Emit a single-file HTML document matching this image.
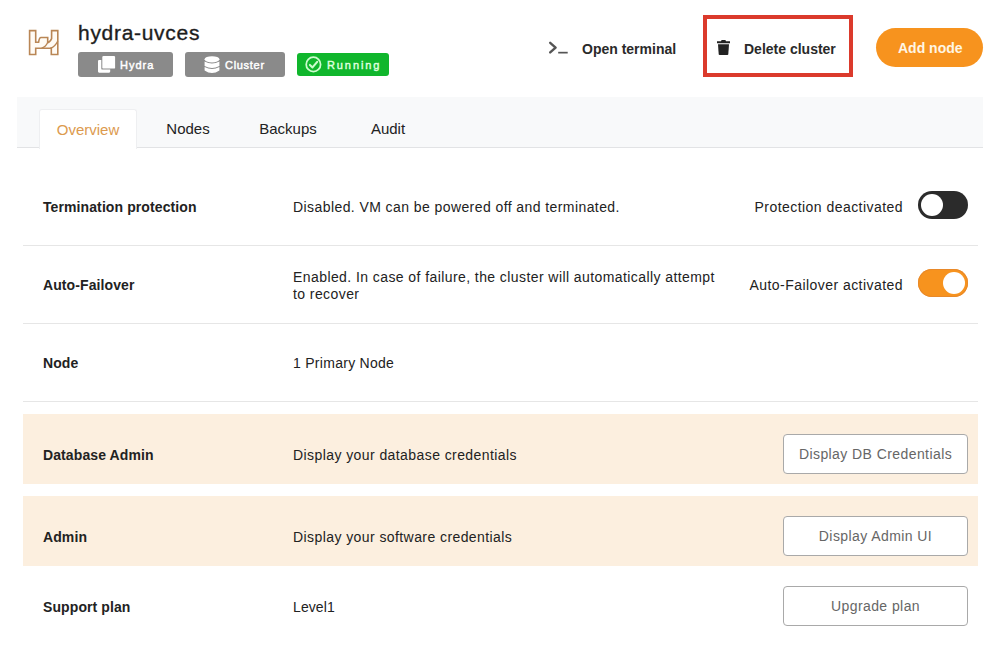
<!DOCTYPE html>
<html><head><meta charset="utf-8">
<style>
*{box-sizing:border-box;margin:0;padding:0}
html,body{width:1000px;height:646px;overflow:hidden;background:#fff;font-family:"Liberation Sans",sans-serif;color:#222}
.abs{position:absolute}
.logo{left:26px;top:27px;width:36px;height:31px}
.title{left:78px;top:20px;font-size:21px;line-height:26px;color:#1d1d1d;white-space:nowrap;letter-spacing:0.7px;-webkit-text-stroke:0.35px #1d1d1d}
.badge{top:52px;height:25px;border-radius:3px;background:#8a8a8a;color:#fff}
.btxt{position:absolute;top:6px;font-size:11px;line-height:14px;font-weight:normal;letter-spacing:1px;white-space:nowrap;-webkit-text-stroke:0.45px currentColor}
.b1{left:78px;width:95px}
.b2{left:185px;width:100px}
.b3{left:297px;width:92px;top:53px;height:23px;background:#10b62c;color:#dcffdc}
.hbtn{font-size:14px;line-height:16px;font-weight:bold;color:#2a2a2a;white-space:nowrap;letter-spacing:0}
.redbox{left:703px;top:15px;width:150px;height:62px;border:4px solid #db3a2c}
.addnode{left:876px;top:28px;width:107px;height:39px;border-radius:20px;background:#f7931e;color:#fff8ea}
.tabbar{left:17px;top:97px;width:966px;height:51px;background:#f8f9fa;border-bottom:1px solid #e2e3e5}
.tab{top:109px;height:39px;width:98px;font-size:15px;color:#222;display:flex;align-items:center;justify-content:center}
.tab.active{background:#fff;color:#dc9a4e;border-radius:3px 3px 0 0;height:40px;padding-bottom:0px;border:1px solid #eeeff1;border-bottom:none}
.row{left:23px;width:955px;border-bottom:1px solid #e6e6e6}
.peach{background:#fcefdf;border-bottom:none}
.lbl{position:absolute;left:20px;font-size:14px;line-height:17px;font-weight:bold;color:#222;white-space:nowrap;letter-spacing:0.1px}
.val{position:absolute;left:270px;font-size:14px;color:#222;white-space:nowrap;line-height:17px;letter-spacing:0.42px}
.rt{position:absolute;right:75px;font-size:14px;line-height:17px;color:#222;white-space:nowrap;letter-spacing:0.45px}
.tog{position:absolute;width:50px;height:28px;border-radius:14px}
.knob{position:absolute;top:3px;width:22px;height:22px;border-radius:11px;background:#fff}
.obtn{position:absolute;left:760px;width:185px;height:40px;border:1px solid #a9a9a9;border-radius:4px;background:#fff;color:#666;font-size:14px;letter-spacing:0.42px;display:flex;align-items:center;justify-content:center}
</style></head><body>
<svg class="abs logo" viewBox="26 27 36 31">
<path d="M29.6 30.6H35.7V42.2H38.6Q39.3 37.5 41 37.5H47.7V42.5H48.5Q50.6 41.2 51.6 38.6V30.6H57.8V54.5H51.3V48.2H35.7V54.5H29.6Z" fill="#fffbf5" stroke="#b98655" stroke-width="1.6"/>
<path d="M47.7 42.5Q45.5 47 41.6 48.2M50.3 48.2Q55 47 57.8 41" fill="none" stroke="#b98655" stroke-width="1.4"/>
</svg>
<div class="abs title">hydra-uvces</div>
<div class="abs badge b1">
  <svg class="abs" style="left:19px;top:3px" width="19" height="19" viewBox="0 0 19 19"><path d="M1 6Q1 4.9 2.1 4.9H4.3V13.4Q4.3 14.6 5.5 14.6H13.2V16.6Q13.2 17.7 12.1 17.7H2.1Q1 17.7 1 16.6Z" fill="#fff"/><rect x="5.3" y="0.9" width="12.8" height="12.7" rx="1.2" fill="#fff"/></svg>
  <div class="btxt" style="left:42px">Hydra</div>
</div>
<div class="abs badge b2">
  <svg class="abs" style="left:19px;top:3.8px" width="16" height="18" viewBox="0 0 16 18"><ellipse cx="8" cy="3.3" rx="7.4" ry="3.1" fill="#fff"/><path d="M0.6 5.4Q8 9.6 15.4 5.4V10Q8 14.2 0.6 10Z" fill="#fff"/><path d="M0.6 11Q8 15.2 15.4 11V14.6Q8 19.6 0.6 14.6Z" fill="#fff"/></svg>
  <div class="btxt" style="left:40px;letter-spacing:0.7px">Cluster</div>
</div>
<div class="abs badge b3">
  <svg class="abs" style="left:8px;top:2px" width="18" height="18" viewBox="0 0 18 18"><circle cx="8.4" cy="9.4" r="7.2" fill="none" stroke="#cdfccd" stroke-width="1.75"/><path d="M4.9 9.9L7.5 12.4L12.2 6.9" fill="none" stroke="#cdfccd" stroke-width="2.1" stroke-linecap="round" stroke-linejoin="round"/></svg>
  <div class="btxt" style="left:30px;top:5px;letter-spacing:1.9px">Running</div>
</div>

<svg class="abs" style="left:546px;top:38px" width="24" height="18" viewBox="0 0 24 18"><path d="M4.2 4.8L9.6 9.6L4.2 14.4" fill="none" stroke="#555" stroke-width="2.4" stroke-linecap="round" stroke-linejoin="round"/><rect x="12.2" y="13.8" width="9.5" height="1.7" fill="#555"/></svg>
<div class="abs hbtn" style="left:582px;top:41px">Open terminal</div>
<div class="abs redbox"></div>
<svg class="abs" style="left:715px;top:38px" width="17" height="18" viewBox="0 0 17 18"><path d="M2 3.2H6L6.6 2H10.4L11 3.2H15V5.2H2Z" fill="#222"/><path d="M3 6.2H14L13.3 16.2Q13.2 17 12.4 17H4.6Q3.8 17 3.7 16.2Z" fill="#222"/></svg>
<div class="abs hbtn" style="left:744px;top:41px">Delete cluster</div>
<div class="abs addnode"><div class="abs hbtn" style="left:22px;top:12px;color:#fff6e4">Add node</div></div>

<div class="abs tabbar"></div>
<div class="abs tab active" style="left:39px">Overview</div>
<div class="abs tab" style="left:139px">Nodes</div>
<div class="abs tab" style="left:239px">Backups</div>
<div class="abs tab" style="left:339px">Audit</div>

<div class="abs row" style="top:168px;height:78px">
  <div class="lbl" style="top:31px">Termination protection</div>
  <div class="val" style="top:31px">Disabled. VM can be powered off and terminated.</div>
  <div class="rt" style="top:31px">Protection deactivated</div>
  <div class="tog" style="left:895px;top:23px;background:#2b2b2b"><div class="knob" style="left:3px"></div></div>
</div>
<div class="abs row" style="top:246px;height:78px">
  <div class="lbl" style="top:31px">Auto-Failover</div>
  <div class="val" style="top:23px">Enabled. In case of failure, the cluster will automatically attempt<br>to recover</div>
  <div class="rt" style="top:31px">Auto-Failover activated</div>
  <div class="tog" style="left:895px;top:23px;background:#f7931e;box-shadow:inset 0 0 0 1px #e8892a"><div class="knob" style="left:25px"></div></div>
</div>
<div class="abs row" style="top:324px;height:78px">
  <div class="lbl" style="top:31px">Node</div>
  <div class="val" style="top:31px;letter-spacing:0.28px">1 Primary Node</div>
</div>
<div class="abs row peach" style="top:414px;height:70px">
  <div class="lbl" style="top:33px">Database Admin</div>
  <div class="val" style="top:33px">Display your database credentials</div>
  <div class="obtn" style="top:20px">Display DB Credentials</div>
</div>
<div class="abs row peach" style="top:496px;height:70px">
  <div class="lbl" style="top:33px">Admin</div>
  <div class="val" style="top:33px">Display your software credentials</div>
  <div class="obtn" style="top:20px">Display Admin UI</div>
</div>
<div class="abs row" style="top:566px;height:80px;border-bottom:none">
  <div class="lbl" style="top:33px">Support plan</div>
  <div class="val" style="top:33px;letter-spacing:0.1px">Level1</div>
  <div class="obtn" style="top:20px">Upgrade plan</div>
</div>
</body></html>
